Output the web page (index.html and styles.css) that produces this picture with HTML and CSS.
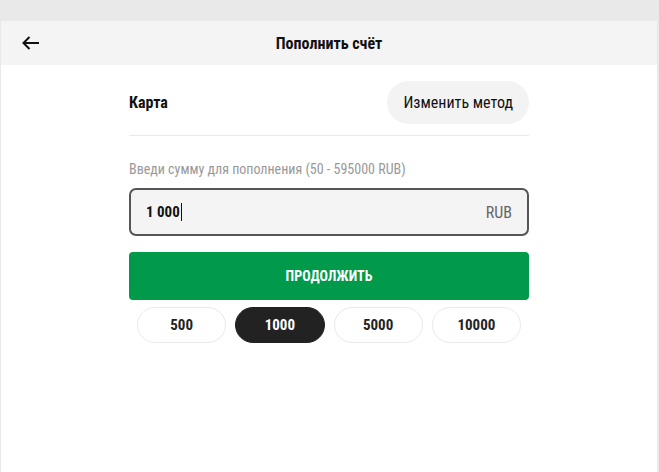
FILE: index.html
```html
<!DOCTYPE html>
<html lang="ru">
<head>
<meta charset="utf-8">
<title>Пополнить счёт</title>
<link rel="stylesheet" href="styles.css">
</head>
<body>
<div class="panel">
  <header class="topbar">
    <button class="back" aria-label="Назад">
      <svg width="18" height="14" viewBox="0 0 18 14"><path d="M1.5 7H17M7.5 1L1.5 7l6 6" fill="none" stroke="#111" stroke-width="2"/></svg>
    </button>
    <h1 class="title">Пополнить счёт</h1>
  </header>
  <main class="content">
    <div class="method-row">
      <span class="method">Карта</span>
      <button class="change">Изменить метод</button>
    </div>
    <div class="divider"></div>
    <div class="hint">Введи сумму для пополнения (50 - 595000 RUB)</div>
    <div class="amount-field">
      <span class="amount">1 000<span class="caret"></span></span>
      <span class="currency">RUB</span>
    </div>
    <button class="submit">ПРОДОЛЖИТЬ</button>
    <div class="chips">
      <button class="chip">500</button>
      <button class="chip active">1000</button>
      <button class="chip">5000</button>
      <button class="chip">10000</button>
    </div>
  </main>
</div>
</body>
</html>
```

FILE: styles.css
```css
* { box-sizing: border-box; }
html, body { height: 100%; }
body {
  margin: 0;
  background: #e9e9e9;
  padding: 21px 2px 0 1px;
  font-family: Roboto, "Noto Sans", sans-serif;
  font-stretch: 75%;
  color: #111;
}
button { font-family: inherit; font-stretch: inherit; border: 0; cursor: pointer; }
.panel {
  background: #fff;
  height: 100%;
  display: flex;
  flex-direction: column;
}
.topbar {
  height: 44px;
  background: #f4f4f4;
  display: flex;
  align-items: center;
  justify-content: center;
  position: relative;
}
.back {
  position: absolute;
  left: 21px;
  top: 15px;
  padding: 0;
  background: none;
  width: 18px;
  height: 14px;
  display: flex;
}
.title {
  margin: 0;
  font-size: 16px;
  font-weight: 700;
}
.content {
  width: 400px;
  margin: 0 auto;
  display: flex;
  flex-direction: column;
  padding-top: 16px;
}
.method-row {
  display: flex;
  justify-content: space-between;
  align-items: center;
  height: 43px;
}
.method { font-size: 16px; font-weight: 700; }
.change {
  height: 43px;
  padding: 0 16px;
  border-radius: 22px;
  background: #f3f3f3;
  font-size: 16px;
  color: #111;
}
.divider {
  height: 1px;
  background: #e9e9e9;
  margin-top: 11px;
}
.hint {
  margin-top: 26px;
  font-size: 14px;
  color: #999;
  line-height: 15px;
}
.amount-field {
  margin-top: 11px;
  height: 48px;
  border: 2px solid #555;
  border-radius: 7px;
  background: #f4f4f4;
  display: flex;
  justify-content: space-between;
  align-items: center;
  padding: 0 15px 0 15px;
}
.amount {
  font-size: 15px;
  font-weight: 700;
  display: flex;
  align-items: center;
}
.caret {
  display: inline-block;
  width: 1px;
  height: 18px;
  background: #111;
  margin-left: 1px;
}
.currency { font-size: 16px; color: #666; }
.submit {
  margin-top: 16px;
  height: 48px;
  border-radius: 4px;
  background: #009a4a;
  color: #fff;
  font-size: 14px;
  font-weight: 700;
}
.chips {
  margin-top: 7px;
  display: flex;
  gap: 9px;
  padding: 0 8px;
}
.chip {
  flex: 1;
  height: 36px;
  border: 1px solid #e9e9e9;
  border-radius: 18px;
  background: #fff;
  font-size: 15px;
  font-weight: 700;
  color: #222;
}
.chip.active {
  background: #222;
  border-color: #222;
  color: #fff;
}
```
